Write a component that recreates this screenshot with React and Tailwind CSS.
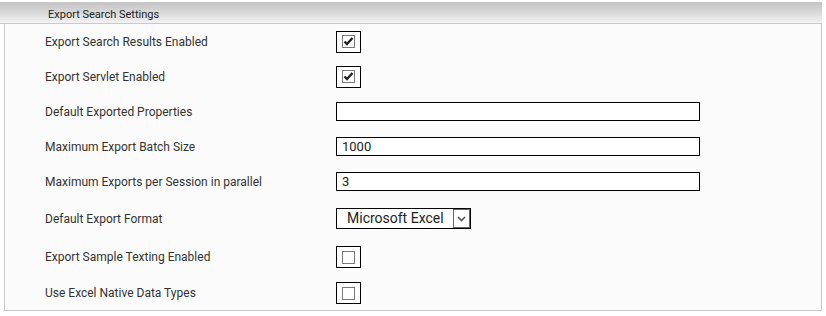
const rows = [
    { label: "Export Search Results Enabled", type: "check", checked: true, h: "h-[35px]" },
    { label: "Export Servlet Enabled", type: "check", checked: true, h: "h-[35px]" },
    { label: "Default Exported Properties", type: "text", value: "", h: "h-[35px]" },
    { label: "Maximum Export Batch Size", type: "text", value: "1000", h: "h-[35px]" },
    { label: "Maximum Exports per Session in parallel", type: "text", value: "3", h: "h-[35px]" },
    { label: "Default Export Format", type: "select", value: "Microsoft Excel", h: "h-[39px]" },
    { label: "Export Sample Texting Enabled", type: "check", checked: false, h: "h-[38px]" },
    { label: "Use Excel Native Data Types", type: "check", checked: false, h: "h-[34px]" },
];

function CheckBox({ checked }) {
    return (
        <div className="flex h-[22px] w-[25px] items-center justify-center border border-black bg-white">
            <div className="flex h-[13px] w-[13px] items-center justify-center border border-[#7a7a7a] bg-white">
                {checked && (
                    <svg width="11" height="11" viewBox="0 0 11 11">
                        <path
                            d="M1.5 5.5 L4 8 L9.5 2"
                            fill="none"
                            stroke="#222"
                            strokeWidth="2.4"
                        />
                    </svg>
                )}
            </div>
        </div>
    );
}

function TextBox({ value }) {
    return (
        <div className="flex h-[19px] w-[364px] items-center border border-black bg-white pl-[5px] text-[13px] text-[#222]">
            {value}
        </div>
    );
}

function SelectBox({ value }) {
    return (
        <div className="flex h-[21px] w-[135px] items-center justify-between border border-black bg-white pl-[10px] pr-0">
            <span className="text-[14px] text-[#222]">{value}</span>
            <div className="flex h-[19px] w-[17px] items-center justify-center border border-[#666] bg-white">
                <svg width="9" height="6" viewBox="0 0 9 6">
                    <path d="M1 1 L4.5 4.5 L8 1" fill="none" stroke="#555" strokeWidth="1.6" />
                </svg>
            </div>
        </div>
    );
}

export default function App() {
    return (
        <div className="h-[316px] w-[826px] bg-white pt-[2px] font-['Roboto',sans-serif]">
            {/* ===== HEADER ===== */}
            <div className="w-[822px] border-t border-[#c9c9c9]">
                <div className="flex h-[19px] items-end bg-gradient-to-b from-[#c4c4c4] to-[#efefef] pb-[1px] pl-[48px] text-[11px] leading-[13px] text-[#222]">
                    Export Search Settings
                </div>
                <div className="h-[1px] bg-[#f4f4f4]" />
                <div className="h-[1px] bg-[#c9c9c9]" />
            </div>

            {/* ===== BODY ===== */}
            <div className="ml-[4px] w-[818px] border-x border-b border-[#c9c9c9] bg-[#fbfbfb]">
                {rows.map((r) => (
                    <div key={r.label} className={`flex items-center ${r.h}`}>
                        <div className="w-[331px] pl-[40px] text-[12px] text-[#333]">
                            {r.label}
                        </div>
                        {r.type === "check" && <CheckBox checked={r.checked} />}
                        {r.type === "text" && <TextBox value={r.value} />}
                        {r.type === "select" && <SelectBox value={r.value} />}
                    </div>
                ))}
            </div>
        </div>
    );
}
